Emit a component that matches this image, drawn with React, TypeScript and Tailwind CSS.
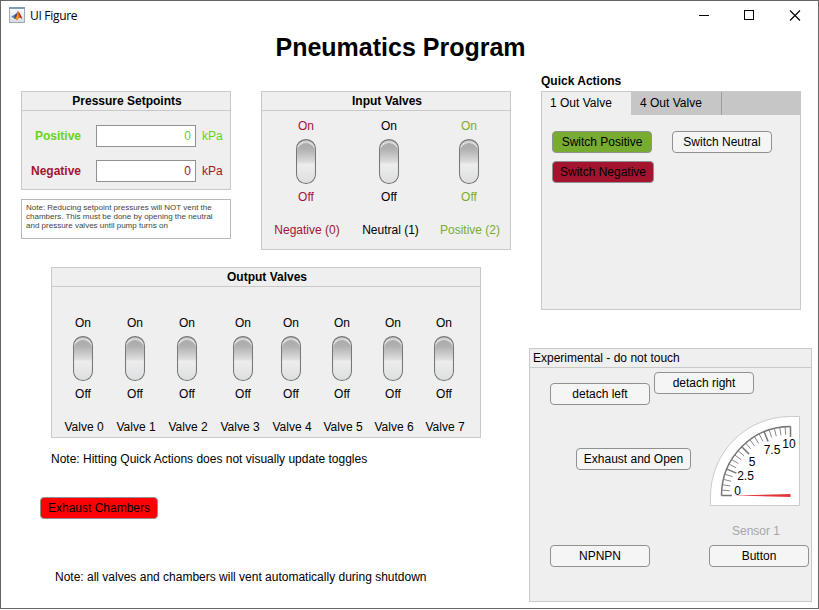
import React from "react";

function MatlabIcon() {
  return (
    <svg width="16" height="16" viewBox="0 0 16 16" className="-mt-[2px]">
      <defs>
        <linearGradient id="iconBg" x1="0" y1="0" x2="0" y2="1">
          <stop offset="0" stopColor="#ffffff" />
          <stop offset="1" stopColor="#d3dce3" />
        </linearGradient>
      </defs>
      <rect x="0.5" y="0.5" width="15" height="15" fill="url(#iconBg)" stroke="#a3aab0" />
      <rect x="0" y="0" width="16" height="2" fill="#7d9dbb" />
      <path d="M2 9.5 L6 7.5 L8 9 L6 12 L4.5 11 Z" fill="#3f8fc4" />
      <path d="M6 7.5 Q8 6.5 9 4 L8.3 9 L6 12 L5 11 Z" fill="#3c4a78" />
      <path d="M9 4 Q10.6 5 13.4 12 Q11.5 10.2 10 11 Q8.5 13 7.4 13.2 Q7 11.5 5.6 11.2 Q8 9.5 9 4 Z" fill="#e0601c" />
      <path d="M8.9 5 L9.6 10 L8 13 L7 12 Q8.4 9 8.9 5 Z" fill="#f0a03a" />
      <path d="M9.6 5 Q11.5 7.5 13.4 12 L11 10.2 Z" fill="#9c2c16" />
    </svg>
  );
}

function TitleBar() {
  return (
    <header className="flex h-[30px] items-center pl-2">
      <MatlabIcon />
      <span className="ml-[5px] flex-1 font-['Open_Sans','Noto_Sans',sans-serif] text-[12px] tracking-[-0.3px]">
        UI Figure
      </span>
      <svg width="102" height="11" viewBox="0 0 102 11" className="-mt-px mr-[17px]" fill="none" stroke="#000">
        <path d="M0 5.5H10" shapeRendering="crispEdges" />
        <path d="M45.5 0.5h9v9h-9z" shapeRendering="crispEdges" />
        <path d="M91 0.5 101 10.5M101 0.5 91 10.5" strokeWidth="1.1" />
      </svg>
    </header>
  );
}

function Panel({ title, className, left, children }: { title: string; className: string; left?: boolean; children: React.ReactNode }) {
  return (
    <section className={"border border-[#c9c9c9] bg-[#efefef] " + className}>
      <h2
        className={
          "h-[19px] border-b border-[#c9c9c9] leading-[18px] " +
          (left ? "pl-[3px] text-left" : "pl-[2px] text-center font-bold")
        }
      >
        {title}
      </h2>
      {children}
    </section>
  );
}

function Rocker() {
  return (
    <svg width="20" height="45" viewBox="0 0 20 45" className="block">
      <defs>
        <linearGradient id="rockerFace" x1="0" y1="0" x2="0" y2="1">
          <stop offset="0" stopColor="#ababab" />
          <stop offset="0.15" stopColor="#b0b0b0" />
          <stop offset="0.48" stopColor="#dcdcdc" />
          <stop offset="0.54" stopColor="#ededed" />
          <stop offset="1" stopColor="#dcdfe0" />
        </linearGradient>
        <linearGradient id="rockerRim" x1="0" y1="0" x2="0" y2="1">
          <stop offset="0" stopColor="#c4c4c4" />
          <stop offset="0.12" stopColor="#e4e4e4" />
          <stop offset="0.35" stopColor="#cccccc" />
          <stop offset="0.54" stopColor="#e6e6e6" />
          <stop offset="1" stopColor="#dcdfe0" />
        </linearGradient>
      </defs>
      <rect x="0.6" y="0.6" width="18.8" height="43.8" rx="9.2" fill="url(#rockerRim)" stroke="#777" strokeWidth="1.2" />
      <rect x="1.2" y="4" width="17.6" height="39.7" rx="8.6" fill="url(#rockerFace)" />
    </svg>
  );
}

function ValveSwitch({ label, width, color = "", shift = "", labelShift = "" }: { label: string; width: string; color?: string; shift?: string; labelShift?: string }) {
  return (
    <div className={"flex flex-col items-center " + width + " " + color}>
      <div className={"flex flex-col items-center " + shift}>
        <span className="h-[21px] leading-[16px]">On</span>
        <Rocker />
        <span className="mt-[5px] h-[16px] leading-[16px]">Off</span>
      </div>
      <span className={"mt-[17px] leading-[16px] whitespace-nowrap " + labelShift}>{label}</span>
    </div>
  );
}

function PushButton({ children, className = "", size = "w-[100px]", tone = "bg-[#f5f5f5]" }: { children: React.ReactNode; className?: string; size?: string; tone?: string }) {
  return (
    <button
      className={
        "flex h-[22px] shrink-0 items-center justify-center rounded-[4px] border border-[#919191] whitespace-nowrap " +
        size + " " + tone + " " + className
      }
    >
      {children}
    </button>
  );
}

function SetpointRow({ label, color, className }: { label: string; color: string; className: string }) {
  return (
    <div className={"flex h-[22px] items-center " + color + " " + className}>
      <span className="w-[59px] text-right font-bold">{label}</span>
      <div className="ml-[15px] h-[22px] w-[100px] border border-[#919191] bg-white pr-1 text-right leading-[21px]">0</div>
      <span className="ml-[6px]">kPa</span>
    </div>
  );
}

const point = (r: number, value: number) => {
  const a = (value / 10) * (Math.PI / 2);
  return [80.5 - r * Math.cos(a), 79.5 - r * Math.sin(a)];
};

function Gauge() {
  const ticks = Array.from({ length: 21 }, (_, i) => i / 2);
  const labels: [string, number, number][] = [
    ["0", 27.5, 79],
    ["2.5", 35.5, 64],
    ["5", 42, 50],
    ["7.5", 62, 38],
    ["10", 79, 32],
  ];
  return (
    <svg width="90" height="90" viewBox="0 0 90 90" className="ml-[19px] block">
      <path d="M80.5 0.5H89.5V89.5H0.5V80.5A80 80 0 0 1 80.5 0.5Z" fill="#fff" stroke="#cbcbcb" />
      <path d="M11.5 79.5A69 69 0 0 1 80.5 10.5" fill="none" stroke="#777" strokeWidth="1.5" />
      {ticks.map((v) => {
        const major = v % 2.5 === 0;
        const [x1, y1] = point(69, v);
        const [x2, y2] = point(major ? 58.5 : 61, v);
        return <line key={v} x1={x1} y1={y1} x2={x2} y2={y2} stroke={major ? "#777" : "#888"} strokeWidth={major ? 1.5 : 1} />;
      })}
      {labels.map(([t, x, y]) => (
        <text key={t} x={x} y={y} textAnchor="middle" fontSize="12" fill="#000">
          {t}
        </text>
      ))}
      <path d="M23 79.4 L80.5 78V81Z" fill="#e2383c" />
    </svg>
  );
}

const outputs = [
  { label: "Valve 0", width: "w-[52px]", shift: "mr-[2px]" },
  { label: "Valve 1", width: "w-[52px]", shift: "mr-[2px]" },
  { label: "Valve 2", width: "w-[52px]", shift: "mr-[2px]" },
  { label: "Valve 3", width: "w-[52px]", shift: "ml-[6px]" },
  { label: "Valve 4", width: "w-[52px]", shift: "mr-[2px]" },
  { label: "Valve 5", width: "w-[50px]", shift: "mr-[2px]" },
  { label: "Valve 6", width: "w-[52px]", shift: "mr-[2px]" },
  { label: "Valve 7", width: "w-[50px]", shift: "mr-[2px]" },
];

export default function App() {
  return (
    <div className="h-[610px] w-[819px] overflow-hidden bg-white">
      <div className="h-[609px] w-[819px] border border-[#666] bg-white font-['Liberation_Sans',Arial,sans-serif] text-[12px] text-black">
        <TitleBar />
        <h1 className="h-[33px] w-[799px] text-center text-[25px] leading-[32px] font-bold">Pneumatics Program</h1>
        <main className="flex">
          <div className="w-[510px] pt-[27px] pl-5">
            <div className="flex h-[159px] items-start gap-[30px]">
              <div className="w-[210px]">
                <Panel title="Pressure Setpoints" className="h-[99px]">
                  <SetpointRow label="Positive" color="text-[#65d51c]" className="mt-[14px]" />
                  <SetpointRow label="Negative" color="text-[#a2142f]" className="mt-[13px]" />
                </Panel>
                <p className="mt-[9px] h-[40px] border border-[#b8b8b8] bg-white pt-[3px] pl-1 text-[8px] leading-[9px] whitespace-nowrap text-[#444]">
                  Note: Reducing setpoint pressures will NOT vent the
                  <br />
                  chambers. This must be done by opening the neutral
                  <br />
                  and pressure valves until pump turns on
                </p>
              </div>
              <Panel title="Input Valves" className="h-[159px] w-[250px]">
                <div className="flex pt-[7px]">
                  <ValveSwitch label="Negative (0)" width="w-[88px]" color="text-[#a2142f]" labelShift="ml-[2px]" />
                  <ValveSwitch label="Neutral (1)" width="w-[78px]" labelShift="ml-[3px]" />
                  <ValveSwitch label="Positive (2)" width="w-[82px]" color="text-[#77ac30]" labelShift="ml-[2px]" />
                </div>
              </Panel>
            </div>
            <Panel title="Output Valves" className="mt-[17px] ml-[30px] h-[171px] w-[430px]">
              <div className="flex pt-[28px] pl-[6px]">
                {outputs.map((o) => (
                  <ValveSwitch key={o.label} {...o} />
                ))}
              </div>
            </Panel>
            <p className="mt-[13px] ml-[30px] h-4 leading-4">Note: Hitting Quick Actions does not visually update toggles</p>
            <PushButton className="mt-[30px] ml-[19px]" size="w-[118px]" tone="bg-[#ff0000]">
              Exhaust Chambers
            </PushButton>
            <p className="mt-[50px] ml-[34px] h-4 leading-4">Note: all valves and chambers will vent automatically during shutdown</p>
          </div>
          <div className="ml-[18px] w-[283px] pt-[8px]">
            <h2 className="ml-3 h-[19px] leading-[18px] font-bold">Quick Actions</h2>
            <section className="ml-3 h-[219px] w-[260px] border border-[#c9c9c9] bg-[#efefef]">
              <nav className="flex h-[23px] bg-[#c6c6c6] leading-[22px]">
                <div className="w-[89px] bg-[#efefef] pl-[8px]">1 Out Valve</div>
                <div className="w-[91px] border-r border-[#9c9c9c] pl-[9px]">4 Out Valve</div>
              </nav>
              <div className="mt-4 ml-[10px] flex gap-5">
                <PushButton tone="bg-[#77ac30]">Switch Positive</PushButton>
                <PushButton>Switch Neutral</PushButton>
              </div>
              <PushButton className="mt-2 ml-[10px]" size="w-[102px]" tone="bg-[#a2142f]">
                Switch Negative
              </PushButton>
            </section>
            <Panel title="Experimental - do not touch" left className="mt-[38px] h-[254px] w-[283px]">
              <div className="flex items-start pt-1 pl-5">
                <PushButton className="mt-[11px]">detach left</PushButton>
                <PushButton className="ml-1">detach right</PushButton>
              </div>
              <div className="mt-[11px] flex items-start pl-[46px]">
                <PushButton className="mt-8" size="w-[115px]">
                  Exhaust and Open
                </PushButton>
                <Gauge />
              </div>
              <p className="mt-[17px] ml-[202px] h-[22px] leading-4 text-[#a6a6a6]">Sensor 1</p>
              <div className="flex gap-[59px] pl-5">
                <PushButton>NPNPN</PushButton>
                <PushButton>Button</PushButton>
              </div>
            </Panel>
          </div>
        </main>
      </div>
    </div>
  );
}
